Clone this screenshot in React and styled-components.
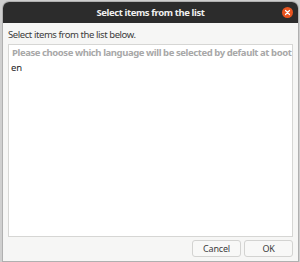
import React from 'react';
import styled, { createGlobalStyle } from 'styled-components';

const GlobalStyle = createGlobalStyle`
  html, body {
    margin: 0;
    padding: 0;
    background: #cfcfcf;
  }
  body {
    font-family: "Noto Sans", "DejaVu Sans", sans-serif;
  }
`;

const Screen = styled.div`
  width: 300px;
  height: 262px;
  display: flex;
  padding: 2px 2px 1px 3px;
  box-sizing: border-box;
`;

const Dialog = styled.div`
  flex: 1;
  display: flex;
  flex-direction: column;
  background: #f6f6f5;
  border-radius: 6px 6px 0 0;
  overflow: hidden;
  box-shadow: 0 0 0 1px rgba(0, 0, 0, 0.15);
`;

const TitleBar = styled.div`
  height: 21px;
  background: #2c2c2c;
  display: flex;
  align-items: center;
  justify-content: center;
  position: relative;
  color: #f0f0f0;
  font-size: 9.5px;
  letter-spacing: -0.4px;
  font-weight: 700;
`;

const CloseButton = styled.div`
  position: absolute;
  right: 5px;
  top: 5px;
  width: 11px;
  height: 11px;
  border-radius: 50%;
  background: #e9541f;
  display: flex;
  align-items: center;
  justify-content: center;
`;

const Body = styled.div`
  flex: 1;
  display: flex;
  flex-direction: column;
  padding: 5px 5px 4px 5px;
`;

const Label = styled.div`
  font-size: 9.5px;
  letter-spacing: -0.42px;
  line-height: 13px;
  color: #3c3c3c;
  margin-bottom: 3px;
`;

const ListBox = styled.div`
  flex: 1;
  background: #ffffff;
  border: 1px solid #d6d6d4;
  display: flex;
  flex-direction: column;
`;

const ListHeader = styled.div`
  font-size: 9.5px;
  line-height: 13px;
  letter-spacing: -0.42px;
  font-weight: 700;
  color: #a8a8a8;
  padding: 1px 1px 0 3px;
  white-space: nowrap;
  overflow: hidden;
`;

const ListItem = styled.div`
  font-size: 9.5px;
  line-height: 13px;
  color: #222222;
  padding: 2px 2px;
`;

const Footer = styled.div`
  display: flex;
  justify-content: flex-end;
  gap: 3px;
  padding-top: 3px;
`;

const Button = styled.div`
  width: 49px;
  height: 17px;
  box-sizing: border-box;
  border: 1px solid #d3d3d1;
  border-radius: 3px;
  background: #f8f8f7;
  font-size: 9px;
  letter-spacing: -0.2px;
  color: #3c3c3c;
  display: flex;
  align-items: center;
  justify-content: center;
`;

export default function App() {
  return (
    <>
      <GlobalStyle />
      <Screen>
        <Dialog>
          <TitleBar>
            Select items from the list
            <CloseButton>
              <svg width="7" height="7" viewBox="0 0 7 7">
                <path d="M1.5 1.5 L5.5 5.5 M5.5 1.5 L1.5 5.5" stroke="#fff" strokeWidth="1.2" strokeLinecap="round" />
              </svg>
            </CloseButton>
          </TitleBar>
          <Body>
            <Label>Select items from the list below.</Label>
            <ListBox>
              <ListHeader>Please choose which language will be selected by default at boot</ListHeader>
              <ListItem>en</ListItem>
            </ListBox>
            <Footer>
              <Button>Cancel</Button>
              <Button>OK</Button>
            </Footer>
          </Body>
        </Dialog>
      </Screen>
    </>
  );
}
